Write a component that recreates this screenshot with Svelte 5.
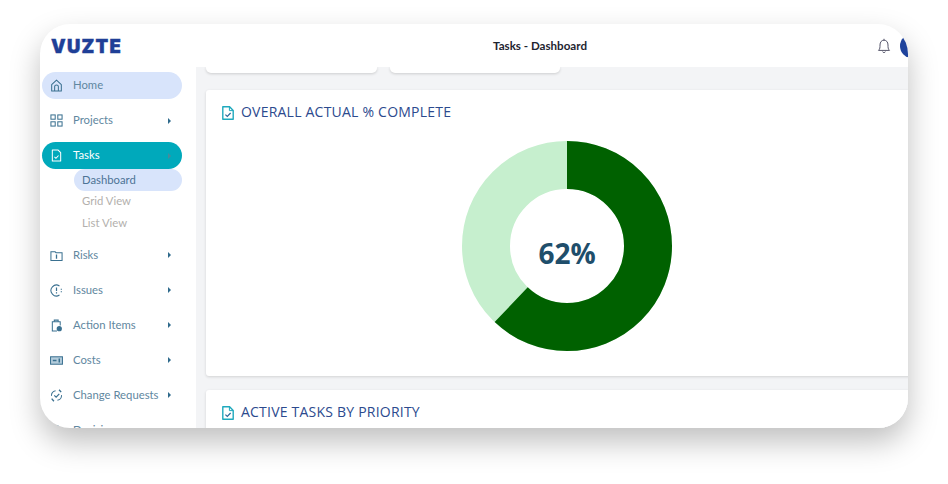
<script>
	const after = [
		{ label: "Risks", icon: "risks" },
		{ label: "Issues", icon: "issues" },
		{ label: "Action Items", icon: "action" },
		{ label: "Costs", icon: "costs" },
		{ label: "Change Requests", icon: "change" },
		{ label: "Decisions", icon: "decisions" }
	];
	const percent = 62;
	const radius = 81;
	const circumference = 2 * Math.PI * radius;
</script>

{#snippet icon(name)}
	<svg class="icon" viewBox="0 0 14 14" fill="none" stroke="currentColor" stroke-width="1.1">
		{#if name === "home"}
			<path d="M1.8 6 L7 1.2 L12.2 6 V13 H1.8 Z" stroke-linejoin="round" />
			<path d="M5 13 V8 C5 6 9 6 9 8 V13" />
		{:else if name === "projects"}
			<rect x="1" y="1" width="4.6" height="4.6" />
			<rect x="8.4" y="1" width="4.6" height="4.6" />
			<rect x="1" y="8.4" width="4.6" height="4.6" />
			<rect x="8.4" y="8.4" width="4.6" height="4.6" />
		{:else if name === "tasks"}
			<path d="M2.5 1 H8.5 L11.5 4 V13 H2.5 Z" stroke-linejoin="round" />
			<path d="M4.8 8.4 L6.4 10 L9.2 7" />
		{:else if name === "risks"}
			<path d="M1 3 H5.5 L6.5 4 H13 V12.5 H1 Z" />
			<path d="M7 6 V10.5" stroke-width="1.4" />
		{:else if name === "issues"}
			<path d="M10.2 2.2 A5.8 5.8 0 1 0 10.2 11.8" />
			<path d="M7 3.8 V7.6 M7 8.8 V10.2" stroke-width="1.3" />
			<path d="M12.2 5 V6.2 M12.2 7.8 V9" stroke-width="1.3" />
		{:else if name === "action"}
			<path d="M7.5 13 H2.5 V3 H11 V7" />
			<path d="M4.6 3 V1.2 H8.8 V3" />
			<circle cx="10" cy="10.4" r="2.8" fill="currentColor" stroke="none" />
		{:else if name === "costs"}
			<rect x=".6" y="3" width="12.8" height="8" fill="#b4cddc" />
			<path d="M3 7 H7" stroke-width="1.4" />
			<path d="M10 4.8 V9.2" stroke-width="1.6" />
		{:else if name === "change"}
			<path d="M1.6 7.4 A5.4 5.4 0 0 1 6 1.8 M12.4 6.6 A5.4 5.4 0 0 1 8 12.2" />
			<path d="M9.8 .8 L12 3.4 M1.8 10.4 L4.2 13.2" stroke-width="1.5" />
			<path d="M4.6 6.8 L6.6 8.8 L10 5.2" stroke-width="1.3" />
		{:else}
			<circle cx="7" cy="4" r="2.5" />
		{/if}
	</svg>
{/snippet}

{#snippet docIcon()}
	<svg class="doc" viewBox="0 0 12 14" fill="none" stroke="#1fa9bd" stroke-width="1.4">
		<path d="M.8 .8 H7.6 L11.2 4.4 V13.2 H.8 Z" stroke-linejoin="round" />
		<path d="M7.4 .8 V4.6 H11.2" stroke-width="1" />
		<path d="M3.4 8.6 L5.3 10.5 L8.6 7" stroke="#2c6a9a" stroke-width="1.2" />
	</svg>
{/snippet}

<div class="page">
	<div class="window">
		<header>
			<div class="logo">VUZTE</div>
			<h1>Tasks - Dashboard</h1>
			<div class="actions">
				<svg class="bell" viewBox="0 0 14 16" fill="none" stroke="#55556a" stroke-width="1">
					<path d="M1.5 12.4 C3 11 3 9.5 3 7 C3 4 4.6 2.2 7 2.2 C9.4 2.2 11 4 11 7 C11 9.5 11 11 12.5 12.4 Z" stroke-linejoin="round" />
					<path d="M7 .8 V2.2 M5.6 13.6 C6 14.9 8 14.9 8.4 13.6" />
				</svg>
				<span class="avatar"></span>
			</div>
		</header>

		<div class="body">
			<nav>
				<a class="item home">{@render icon("home")}<span>Home</span></a>
				<a class="item">{@render icon("projects")}<span>Projects</span><i class="caret"></i></a>
				<a class="item active">{@render icon("tasks")}<span>Tasks</span><i class="caret"></i></a>
				<div class="sub">
					<a class="current">Dashboard</a>
					<a>Grid View</a>
					<a>List View</a>
				</div>
				{#each after as entry}
					<a class="item">{@render icon(entry.icon)}<span>{entry.label}</span><i class="caret"></i></a>
				{/each}
			</nav>

			<main>
				<div class="stubs">
					<div class="stub"></div>
					<div class="stub"></div>
				</div>

				<section class="card chart">
					<h2>{@render docIcon()}OVERALL ACTUAL % COMPLETE</h2>
					<div class="donut">
						<svg viewBox="0 0 210 210">
							<circle cx="105" cy="105" r={radius} fill="none" stroke="#c6efce" stroke-width="48" />
							<circle
								cx="105"
								cy="105"
								r={radius}
								fill="none"
								stroke="#006100"
								stroke-width="48"
								stroke-dasharray="{(circumference * percent) / 100} {circumference}"
								transform="rotate(-90 105 105)"
							/>
						</svg>
						<strong>{percent}%</strong>
					</div>
				</section>

				<section class="card">
					<h2>{@render docIcon()}ACTIVE TASKS BY PRIORITY</h2>
				</section>
			</main>
		</div>
	</div>
</div>

<style>
	:global(body) {
		background: #fff;
	}
	.page {
		height: 484px;
		padding: 24px 40px 56px;
		box-sizing: border-box;
		overflow: hidden;
	}
	.window {
		display: flex;
		flex-direction: column;
		width: 868px;
		height: 404px;
		background: #fff;
		border-radius: 30px;
		overflow: hidden;
		box-shadow: 0 14px 30px rgba(0, 0, 0, 0.25);
		font-family: Lato, sans-serif;
	}
	header {
		display: flex;
		align-items: center;
		height: 43px;
		flex: none;
		padding-left: 11px;
	}
	.logo {
		width: 442px;
		font-family: Inter, sans-serif;
		font-weight: 900;
		font-size: 18.5px;
		letter-spacing: 1.2px;
		-webkit-text-stroke: 0.4px #1f3f97;
		color: #1f3f97;
	}
	h1 {
		margin: 0;
		font-size: 11.6px;
		font-weight: 700;
		color: #1e2430;
		font-family: Lato, sans-serif;
	}
	.actions {
		flex: 1;
		display: flex;
		align-items: center;
		justify-content: flex-end;
		gap: 9px;
	}
	.bell {
		width: 14px;
		height: 16px;
	}
	.avatar {
		width: 24px;
		height: 24px;
		border-radius: 50%;
		background: #1f439c;
		margin-right: -16px;
		flex: none;
	}
	.body {
		display: flex;
		flex: 1;
		min-height: 0;
	}
	nav {
		width: 156px;
		flex: none;
		padding: 5px 14px 0 2px;
		box-sizing: border-box;
		overflow: hidden;
	}
	.item {
		display: flex;
		align-items: center;
		height: 27px;
		margin-bottom: 8px;
		padding-left: 8px;
		border-radius: 14px;
		font-size: 11.3px;
		color: #5f87a0;
	}
	.item span {
		flex: 1;
		white-space: nowrap;
		padding-bottom: 2px;
	}
	.item:last-child .caret {
		display: none;
	}
	.icon {
		width: 13px;
		height: 13px;
		flex: none;
		margin-right: 10px;
		color: #3a7090;
	}
	.caret {
		width: 0;
		height: 0;
		margin-right: 11px;
		border-left: 3px solid #2f6a8c;
		border-top: 3px solid transparent;
		border-bottom: 3px solid transparent;
	}
	.home {
		background: #d8e4fb;
	}
	.active {
		background: #00a9bb;
		color: #fff;
		margin-bottom: 0;
	}
	.active .icon {
		color: #fff;
	}
	.active .caret {
		border-left-color: #4a8a99;
	}
	.sub {
		display: flex;
		flex-direction: column;
		margin: 0 0 8px 32px;
		font-size: 11.3px;
		color: #b3b0ad;
	}
	.sub a {
		display: flex;
		align-items: center;
		height: 21.5px;
		padding: 0 0 1px 8px;
		box-sizing: border-box;
		border-radius: 11px;
	}
	.sub .current {
		background: #d8e4fb;
		color: #4d7396;
	}
	main {
		flex: 1;
		min-width: 0;
		background: #f3f4f6;
		padding-left: 10px;
		overflow: hidden;
	}
	.stubs {
		display: flex;
		gap: 13px;
		margin-bottom: 17px;
	}
	.stub {
		width: 171px;
		height: 6px;
		background: #fff;
		border-radius: 0 0 5px 5px;
		box-shadow: 0 1px 3px rgba(0, 0, 0, 0.16);
	}
	.stub + .stub {
		width: 170px;
	}
	.card {
		background: #fff;
		margin-right: -30px;
		box-shadow: 0 1px 3px rgba(0, 0, 0, 0.14);
		padding: 14px 16px;
		border-radius: 3px 0 0 3px;
	}
	.chart {
		height: 286px;
		box-sizing: border-box;
		margin-bottom: 14px;
	}
	h2 {
		display: flex;
		align-items: center;
		margin: 0;
		height: 15px;
		padding-bottom: 2px;
		font-size: 14px;
		font-weight: 400;
		line-height: 15px;
		letter-spacing: 0.22px;
		color: #2c4a8e;
		font-family: "Open Sans", sans-serif;
	}
	.doc {
		width: 12px;
		height: 14px;
		margin: 2px 7px 0 0;
		flex: none;
	}
	.donut {
		position: relative;
		width: 210px;
		height: 210px;
		margin: 20px 0 0 240px;
	}
	.donut svg {
		display: block;
		width: 210px;
		height: 210px;
	}
	.donut strong {
		position: absolute;
		inset: 0;
		display: flex;
		align-items: center;
		justify-content: center;
		padding-top: 14px;
		box-sizing: border-box;
		font-family: "Open Sans", sans-serif;
		font-size: 28px;
		font-weight: 700;
		color: #1f4e6b;
	}
</style>
